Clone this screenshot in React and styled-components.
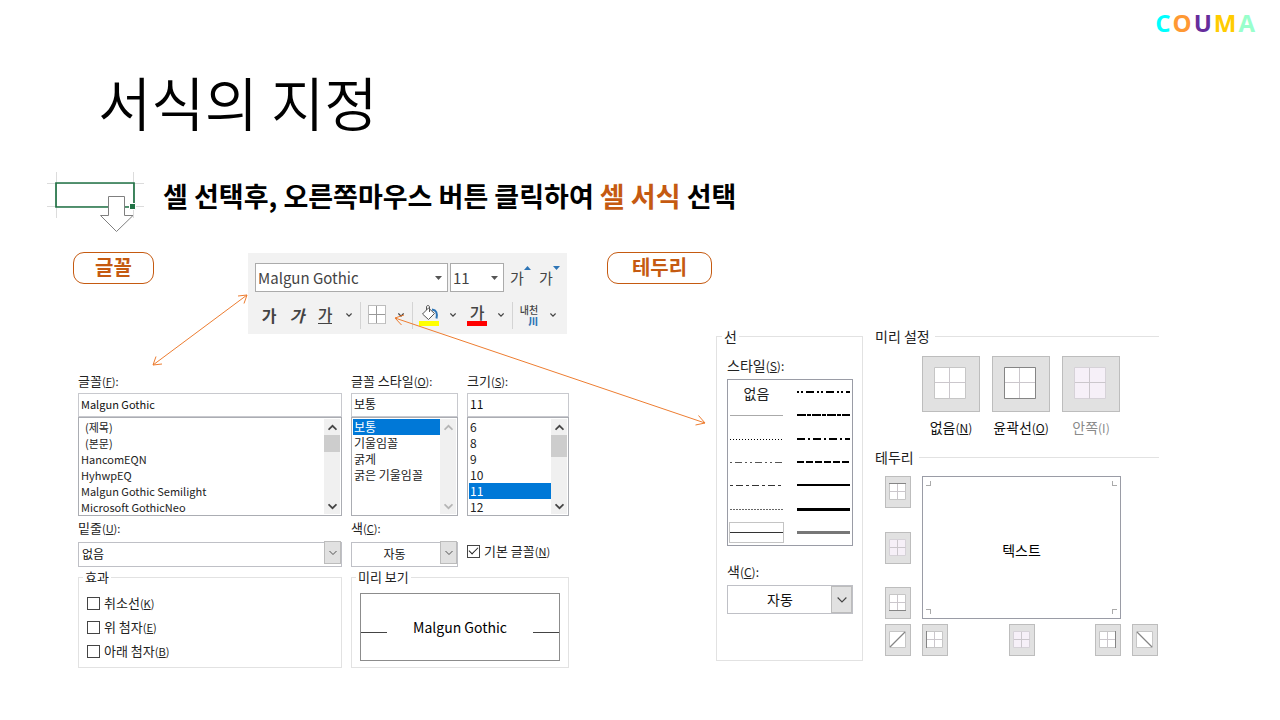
import React from "react";
import styled, { createGlobalStyle, css } from "styled-components";

const GlobalStyle = createGlobalStyle`
  *, *::before, *::after { box-sizing: border-box; }
  body { margin: 0; background: #fff; color: #000; }
  body, button, input, select {
    font-family: "Noto Sans CJK KR", "Noto Sans", sans-serif;
  }
`;

/* ---------- Slide ---------- */
const Slide = styled.div`
  padding-bottom: 28px;
`;
const Brand = styled.header`
  display: flex;
  justify-content: flex-end;
  gap: 2px;
  padding: 0 25px 2px;
  font: 700 24px/46px "Open Sans", sans-serif;
`;
const BrandLetter = styled.span`
  color: ${(p) => p.$color};
`;
const Title = styled.h1`
  margin: 21px 0 39px 98px;
  font-size: 58px;
  font-weight: 350;
  line-height: 64px;
`;
const Cue = styled.section`
  display: flex;
  gap: 19px;
  margin: 0 47px 20px;
`;
const CueText = styled.h2`
  margin: 0;
  font-size: 27px;
  font-weight: 700;
  line-height: 48px;
`;
const Accent = styled.em`
  font-style: normal;
  color: #c55a11;
`;
const Body = styled.main`
  position: relative;
  display: grid;
  grid-template-columns: 496fr 553fr;
  gap: 38px;
  margin: 0 120px 0 73px;
`;
const Connectors = styled.svg`
  position: absolute;
  inset: 0;
  width: 100%;
  height: 100%;
  pointer-events: none;
  fill: none;
  stroke: #ed7d31;
`;
const Tag = styled.h3`
  width: ${(p) => p.$width}px;
  height: 32px;
  margin: 0;
  border: 1px solid #c55a11;
  border-radius: 11px;
  color: #c55a11;
  font-size: 20px;
  font-weight: 700;
  line-height: 27px;
  text-align: center;
`;

/* ---------- Ribbon ---------- */
const TopRow = styled.div`
  display: flex;
  justify-content: space-between;
  align-items: flex-start;
  margin-bottom: 38px;
  padding-right: 2px;
`;
const Ribbon = styled.div`
  width: 319px;
  height: 81px;
  margin-top: 1px;
  padding: 10px 0 0 7px;
  background: #f2f2f2;
  color: #444;
`;
const RibbonRow = styled.div`
  display: flex;
  align-items: center;
  height: ${(p) => p.$height}px;
  margin-bottom: 9px;
`;
const Combo = styled.div`
  display: flex;
  align-items: center;
  width: ${(p) => p.$width}px;
  height: 29px;
  margin-right: 2px;
  padding: 0 5px 0 2px;
  border: 1px solid #ababab;
  background: #fff;
`;
const ComboInput = styled.input`
  flex: 1;
  min-width: 0;
  padding: 0;
  border: 0;
  background: transparent;
  color: #444;
  font-size: 15px;
  line-height: 24px;
`;
const PlainButton = styled.button`
  display: flex;
  align-items: center;
  justify-content: center;
  padding: 0;
  border: 0;
  background: none;
  color: #444;
`;
const ToolButton = styled(PlainButton)`
  width: 28px;
  height: 28px;
  font-size: 16px;
  font-weight: ${(p) => p.$weight || 400};
  font-style: ${(p) => (p.$italic ? "italic" : "normal")};
  line-height: 20px;
`;
const StepButton = styled(PlainButton)`
  align-items: flex-start;
  width: 29px;
  font-size: 15px;
  line-height: 24px;
`;
const MenuButton = styled(PlainButton)`
  width: 20px;
  height: 28px;
`;
const Underlined = styled.span`
  border-bottom: 1px solid #444;
  line-height: 17px;
`;
const ColorLetter = styled.span`
  width: 20px;
  border-bottom: 5px solid #f00;
  line-height: 17px;
  text-align: center;
`;
const Divider = styled.span`
  width: 1px;
  height: 27px;
  margin: 0 2px 0 1px;
  background: #d4d4d4;
`;
const Phonetic = styled.span`
  display: grid;
  justify-items: end;
  font-size: 10px;
  font-weight: 500;
  line-height: 11px;
`;
const PhoneticMark = styled.span`
  color: #2e75b6;
  font-weight: 900;
`;

/* ---------- Shared form parts ---------- */
const Label = styled.label`
  display: block;
  font-size: ${(p) => (p.$large ? 14 : 13)}px;
  line-height: 18px;
  color: #222;
`;
const KeyHint = styled.span`
  font-size: ${(p) => (p.$large ? 12 : 11)}px;
`;
const SelectWrap = styled.div`
  position: relative;
  height: ${(p) => p.$height}px;
`;
const SelectBox = styled.select`
  appearance: none;
  width: 100%;
  height: 100%;
  padding: 0 ${(p) => (p.$center ? 28 : 22)}px 2px ${(p) => (p.$center ? 8 : 3)}px;
  border: 1px solid #bfc0c6;
  border-radius: 0;
  background: #fff;
  color: #111;
  font-size: ${(p) => (p.$large ? 14 : 12)}px;
  text-align: ${(p) => (p.$center ? "center" : "left")};
  text-align-last: ${(p) => (p.$center ? "center" : "left")};
`;
const SelectArrow = styled.span`
  position: absolute;
  inset: 1px 1px 1px auto;
  display: grid;
  place-items: center;
  width: ${(p) => p.$width}px;
  border: 1px solid #bcbcbc;
  background: #e1e1e1;
  pointer-events: none;
`;
const Group = styled.fieldset`
  min-width: 0;
  height: ${(p) => p.$height}px;
  margin: 0;
  padding: 0 8px;
  border: 1px solid #e2e2e2;
`;
const Legend = styled.legend`
  margin-left: ${(p) => p.$indent || 0}px;
  padding: 0 2px;
  font-size: ${(p) => (p.$large ? 14 : 13)}px;
  line-height: 18px;
  color: #222;
`;

/* ---------- Font dialog ---------- */
const FontDialog = styled.form`
  display: grid;
  grid-template-columns: 264fr 107fr 102fr;
  gap: 3px 9px;
  margin-left: 5px;
`;
const TextBox = styled.input`
  display: block;
  width: 100%;
  height: 24px;
  margin-top: 3px;
  padding: 0 2px 3px;
  border: 1px solid #c8c9ce;
  background: #fff;
  color: #111;
  font-size: ${(p) => p.$size}px;
`;
const ListFrame = styled.div`
  display: flex;
  height: 99px;
  padding: 1px;
  border: 1px solid #abadb3;
  background: #fff;
`;
const Options = styled.ul`
  flex: 1;
  min-width: 0;
  margin: 0;
  padding: 0;
  list-style: none;
`;
const Option = styled.li`
  height: 16px;
  padding-left: ${(p) => (p.$indent ? 5 : 1)}px;
  font-size: ${(p) => p.$size}px;
  line-height: 16px;
  color: #222;
  white-space: nowrap;
  ${(p) => p.$selected && css`
    background: #0078d7;
    color: #fff;
  `}
`;
const Track = styled.div`
  display: flex;
  flex-direction: column;
  align-items: center;
  width: 16px;
  padding: 4px 0 3px;
  background: #f0f0f0;
`;
const Thumb = styled.span`
  width: 16px;
  height: ${(p) => p.$height}px;
  margin: 3px 0 auto;
  background: ${(p) => (p.$height ? "#cdcdcd" : "transparent")};
`;
const SelectField = styled.div`
  display: flex;
  flex-direction: column;
  gap: 3px;
`;
const CheckRow = styled.label`
  display: flex;
  align-items: center;
  gap: 4px;
  height: 24px;
  font-size: 13px;
  line-height: 24px;
  color: #222;
  white-space: nowrap;
`;
const DefaultFont = styled.div`
  align-self: end;
  padding-bottom: 2px;
`;
const Checks = styled.div`
  padding-top: 5px;
`;
const Check = styled.input`
  appearance: none;
  flex: none;
  display: grid;
  place-items: center;
  width: 13px;
  height: 13px;
  margin: 0;
  border: 1px solid #444;
  background: #fff;
  &:checked::after {
    content: "";
    width: 9px;
    height: 5px;
    margin-bottom: 3px;
    border: solid #222;
    border-width: 0 0 1px 1px;
    transform: rotate(-45deg);
  }
`;
const PreviewGroup = styled(Group)`
  grid-column: span 2;
`;
const FontPreview = styled.div`
  display: flex;
  align-items: center;
  justify-content: space-between;
  height: 68px;
  margin-top: 7px;
  border: 1px solid #8c8c8c;
  font-size: 14px;
  &::before, &::after {
    content: "";
    width: 26px;
    height: 1px;
    margin-top: 10px;
    background: #444;
  }
`;

/* ---------- Border dialog ---------- */
const BorderDialog = styled.form`
  display: grid;
  grid-template-columns: 147fr 285fr;
  gap: 12px;
  margin: 43px 0 0 109px;
`;
const LineBody = styled.div`
  display: grid;
  gap: 4px;
  padding: 11px 1px 0 2px;
`;
const StyleGrid = styled.div`
  display: grid;
  grid-template-columns: 1fr 1fr;
  grid-template-rows: repeat(7, 1fr);
  grid-auto-flow: column;
  column-gap: 12px;
  height: 167px;
  margin-bottom: 12px;
  padding: 1px;
  border: 1px solid #9a9ca6;
`;
const StyleButton = styled(PlainButton)`
  height: 21px;
  align-self: center;
  border: 1px solid ${(p) => (p.$selected ? "#c4c4c4" : "transparent")};
  font-size: 14px;
  line-height: 18px;
  color: #222;
`;
const StrokeSample = styled.svg`
  display: block;
  width: 100%;
  height: 5px;
`;
const SectionTitle = styled.h4`
  display: flex;
  align-items: center;
  gap: 5px;
  margin: 0 1px 0 0;
  font-size: 14px;
  font-weight: 400;
  line-height: 18px;
  color: #222;
  &::after {
    content: "";
    flex: 1;
    height: 1px;
    background: #e2e2e2;
  }
`;
const Presets = styled.div`
  display: flex;
  gap: 12px;
  margin: 11px 0 11px;
  padding-left: 47px;
`;
const Preset = styled.div`
  display: flex;
  flex-direction: column;
  align-items: center;
  gap: 6px;
  width: 58px;
`;
const PresetLabel = styled.label`
  font-size: 14px;
  line-height: 18px;
  white-space: nowrap;
  color: ${(p) => (p.$muted ? "#8a8a8a" : "#111")};
`;
const TileButton = styled(PlainButton)`
  width: ${(p) => (p.$large ? 58 : 26)}px;
  height: ${(p) => (p.$large ? 56 : 32)}px;
  border: 1px solid #bdbdbd;
  background: #e1e1e1;
`;
const BorderArea = styled.div`
  display: grid;
  grid-template-columns: 26px 1fr 26px;
  gap: 5px 11px;
  margin: 10px 2px 0 10px;
`;
const SideTools = styled.div`
  display: flex;
  flex-direction: column;
  justify-content: space-between;
`;
const BottomTools = styled.div`
  display: flex;
  justify-content: space-between;
`;
const CellPreview = styled.div`
  display: grid;
  grid-template: 1fr auto 1fr / 1fr 1fr;
  grid-column: 2 / 3;
  height: 143px;
  padding: 4px 3px;
  border: 1px solid #9a9ca6;
`;
const CornerMark = styled.span`
  width: 5px;
  height: 5px;
  border: 0 solid #aaa;
  border-width: ${(p) => p.$edges};
  justify-self: ${(p) => p.$x};
  align-self: ${(p) => p.$y};
`;
const PreviewText = styled.span`
  grid-column: 1 / -1;
  padding-top: 4px;
  text-align: center;
  font-size: 14px;
  line-height: 20px;
`;

/* ---------- Drawings ---------- */
const Chevron = ({ size = 8, up, color = "#444", weight = 1 }) => (
  <svg width={size} height={size} viewBox="0 0 8 8" aria-hidden="true">
    <path d={up ? "M0.5 6 4 2.5 7.5 6" : "M0.5 2 4 5.5 7.5 2"} fill="none" stroke={color} strokeWidth={weight} />
  </svg>
);
const Triangle = ({ up, color = "#555" }) => (
  <svg width="7" height="4" viewBox="0 0 7 4" aria-hidden="true">
    <path d={up ? "M0 4h7L3.5 0z" : "M0 0h7L3.5 4z"} fill={color} />
  </svg>
);
const SelectedCell = () => (
  <svg width="97" height="60" viewBox="0 0 97 60" fill="none" aria-hidden="true">
    <path d="M9.5 0v46M86.5 0v46M0 11.5h97M0 34.5h97" stroke="#dcdcdc" />
    <path d="M9 11h78v24H9z" stroke="#217346" strokeWidth="1.7" />
    <path d="M82.5 31.5h6v6h-6z" fill="#217346" stroke="#fff" />
    <path d="M61.5 24.5h16v19h8.5L69.5 59.5 53.5 43.5h8z" fill="#fff" stroke="#7f7f7f" />
  </svg>
);
const DottedGrid = () => (
  <svg width="18" height="20" viewBox="0 0 18 20" fill="none" aria-hidden="true">
    <path d="M1 1h16v18H1z" fill="#fff" />
    <path d="M.5.5h17v18H.5z" stroke="#888" strokeDasharray="1 1" />
    <path d="M8.5 1v17M1 9.5h16" stroke="#999" />
  </svg>
);
const Bucket = () => (
  <svg width="20" height="21" viewBox="0 0 20 21" fill="none" aria-hidden="true">
    <path d="M0 16h20v5H0z" fill="#ff0" />
    <path d="M13 4.5c4.500 .5 5.500 3.500 4.500 9" stroke="#2e75b6" strokeWidth="2" />
    <path d="M9.500 3 15.500 8.500 9.500 14.500 3.500 9z" fill="#fff" stroke="#555" />
    <path d="M7.500 5V2c0-2 3-2 3 0v5" stroke="#555" />
  </svg>
);

/* Four-cell table glyph; the first and last strokes sit on half pixels to stay crisp. */
const GridGlyph = ({ large, kind, muted }) => {
  const size = large ? 34 : 18;
  const end = large ? 31.5 : 16.5;
  const mid = large ? 15.5 : 8.5;
  const edges = {
    top: `M0 .5H${end + 0.5}`,
    bottom: `M0 ${end}H${end + 0.5}`,
    left: `M.5 0V${end + 0.5}`,
    right: `M${end} 0V${end + 0.5}`,
    outline: `M.5 .5H${end}V${end}H.5z`,
    rising: `M1 ${end - 0.5} ${end - 0.5} 1`,
    falling: `M1 1 ${end - 0.5} ${end - 0.5}`,
  };
  const diagonal = kind === "rising" || kind === "falling";
  return (
    <svg width={size} height={size} viewBox={`0 0 ${size} ${size}`} fill="none" aria-hidden="true">
      <path d={`M.5 .5H${end}V${end}H.5z`} fill={muted ? "#f6f0f8" : "#fff"} stroke={muted ? "#d6d2d8" : "#c6c6c6"} />
      {!diagonal && <path d={`M1 ${mid}H${end}`} stroke="#cbc7cc" />}
      {!diagonal && <path d={`M${mid} 1V${end}`} stroke="#cbc7cc" />}
      {edges[kind] && <path d={edges[kind]} stroke="#858585" strokeWidth={diagonal ? 1.3 : 1} />}
    </svg>
  );
};

/* ---------- Composed parts ---------- */
const Key = ({ k, plain, colon, large }) => (
  <KeyHint $large={large}>({plain ? k : <u>{k}</u>}){colon && ":"}</KeyHint>
);

const DropDown = ({ id, value, height, center, large }) => (
  <SelectWrap $height={height}>
    <SelectBox id={id} $center={center} $large={large} defaultValue={value}>
      <option>{value}</option>
    </SelectBox>
    <SelectArrow $width={large ? 21 : 17}><Chevron size={large ? 10 : 8} weight={0.9} /></SelectArrow>
  </SelectWrap>
);

const ListField = ({ id, label, hint, value, items, selected, thumb, size = 12 }) => (
  <div>
    <Label htmlFor={id}>{label}<Key k={hint} colon /></Label>
    <TextBox id={id} defaultValue={value} $size={size} />
    <ListFrame>
      <Options role="listbox" aria-label={label}>
        {items.map((item) => (
          <Option key={item} role="option" aria-selected={item === selected} $size={size}
            $selected={item === selected} $indent={item.startsWith("(")}>{item}</Option>
        ))}
      </Options>
      <Track>
        <Chevron up size={9} weight={1.5} color={thumb ? "#444" : "#b5b5b5"} />
        <Thumb $height={thumb} />
        <Chevron size={9} weight={1.5} color={thumb ? "#444" : "#b5b5b5"} />
      </Track>
    </ListFrame>
  </div>
);

const CheckField = ({ label, hint, checked }) => (
  <CheckRow>
    <Check type="checkbox" defaultChecked={checked} />
    <span>{label}<Key k={hint} /></span>
  </CheckRow>
);

const strokes = [
  { name: "없음" },
  { name: "가는 점선", color: "#aaa", width: 1 },
  { name: "점선", dash: "1 2", width: 1 },
  { name: "이점 쇄선", dash: "2 3 7 3 2 3", color: "#555", width: 1 },
  { name: "일점 쇄선", dash: "3 3 7 3", color: "#333", width: 1 },
  { name: "파선", dash: "2 1", color: "#666", width: 1 },
  { name: "실선", width: 1, color: "#333", selected: true },
  { name: "중간 이점 쇄선", dash: "2 2 2 3 8 3", width: 2 },
  { name: "기울어진 쇄선", dash: "9 1 4 1", width: 2 },
  { name: "중간 일점 쇄선", dash: "8 3 2 3", width: 2 },
  { name: "중간 파선", dash: "7 2", width: 2 },
  { name: "중간 실선", width: 2 },
  { name: "굵은 실선", width: 3 },
  { name: "이중선", width: 3, color: "#777" },
];

const fonts = ["(제목)", "(본문)", "HancomEQN", "HyhwpEQ", "Malgun Gothic Semilight", "Microsoft GothicNeo"];
const styles = ["보통", "기울임꼴", "굵게", "굵은 기울임꼴"];
const sizes = ["6", "8", "9", "10", "11", "12"];
const brand = [["C", "#00ffff"], ["O", "#ff9933"], ["U", "#662d9c"], ["M", "#ffcc00"], ["A", "#99ffcc"]];

const OptionsMenu = ({ name }) => (
  <MenuButton type="button" aria-label={name}><Chevron size={6} weight={1.6} /></MenuButton>
);

const FormatRibbon = () => (
  <Ribbon>
    <RibbonRow $height={29}>
      <Combo $width={193}><ComboInput aria-label="글꼴" defaultValue="Malgun Gothic" /><Triangle /></Combo>
      <Combo $width={54}><ComboInput aria-label="크기" defaultValue="11" /><Triangle /></Combo>
      <StepButton type="button" aria-label="글꼴 크기 크게">가<Triangle up color="#2e75b6" /></StepButton>
      <StepButton type="button" aria-label="글꼴 크기 작게">가<Triangle color="#2e75b6" /></StepButton>
    </RibbonRow>
    <RibbonRow $height={28}>
      <ToolButton type="button" $weight={700}>가</ToolButton>
      <ToolButton type="button" $weight={700} $italic>가</ToolButton>
      <ToolButton type="button" $weight={500}><Underlined>가</Underlined></ToolButton>
      <OptionsMenu name="밑줄 옵션" />
      <Divider />
      <ToolButton type="button" aria-label="테두리"><DottedGrid /></ToolButton>
      <OptionsMenu name="테두리 옵션" />
      <Divider />
      <ToolButton type="button" aria-label="채우기 색"><Bucket /></ToolButton>
      <OptionsMenu name="채우기 옵션" />
      <ToolButton type="button" $weight={500}><ColorLetter>가</ColorLetter></ToolButton>
      <OptionsMenu name="글꼴 색 옵션" />
      <Divider />
      <ToolButton type="button"><Phonetic>내천<PhoneticMark>川</PhoneticMark></Phonetic></ToolButton>
      <OptionsMenu name="윗주 옵션" />
    </RibbonRow>
  </Ribbon>
);

const FontSettings = () => (
  <FontDialog>
    <ListField id="font" label="글꼴" hint="F" value="Malgun Gothic" items={fonts} thumb={17} size={11} />
    <ListField id="style" label="글꼴 스타일" hint="O" value="보통" items={styles} selected="보통" thumb={0} />
    <ListField id="size" label="크기" hint="S" value="11" items={sizes} selected="11" thumb={22} />
    <SelectField>
      <Label htmlFor="underline">밑줄<Key k="U" colon /></Label>
      <DropDown id="underline" value="없음" height={25} />
    </SelectField>
    <SelectField>
      <Label htmlFor="color">색<Key k="C" colon /></Label>
      <DropDown id="color" value="자동" height={25} center />
    </SelectField>
    <DefaultFont><CheckField label="기본 글꼴" hint="N" checked /></DefaultFont>
    <Group $height={100}>
      <Legend $indent={-4}>효과</Legend>
      <Checks>
        <CheckField label="취소선" hint="K" />
        <CheckField label="위 첨자" hint="E" />
        <CheckField label="아래 첨자" hint="B" />
      </Checks>
    </Group>
    <PreviewGroup $height={100}>
      <Legend $indent={-4}>미리 보기</Legend>
      <FontPreview>Malgun Gothic</FontPreview>
    </PreviewGroup>
  </FontDialog>
);

const PresetOption = ({ id, label, hint, plain, kind, muted }) => (
  <Preset>
    <TileButton id={id} type="button" $large><GridGlyph large kind={kind} muted={muted} /></TileButton>
    <PresetLabel htmlFor={id} $muted={muted}>{label}<Key k={hint} plain={plain} large /></PresetLabel>
  </Preset>
);

const EdgeTool = ({ kind, name, muted }) => (
  <TileButton type="button" aria-label={name}><GridGlyph kind={kind} muted={muted} /></TileButton>
);

const BorderSettings = () => (
  <BorderDialog>
    <Group $height={334}>
      <Legend $indent={-3} $large>선</Legend>
      <LineBody>
        <Label as="span" $large>스타일<Key k="S" colon large /></Label>
        <StyleGrid>
          {strokes.map((s) => (
            <StyleButton key={s.name} type="button" aria-label={s.name} $selected={s.selected}>
              {s.width ? (
                <StrokeSample>
                  <line x1="0" x2="100%" y1={s.width % 2 ? 2.5 : 2} y2={s.width % 2 ? 2.5 : 2}
                    stroke={s.color || "#000"} strokeWidth={s.width} strokeDasharray={s.dash} />
                </StrokeSample>
              ) : s.name}
            </StyleButton>
          ))}
        </StyleGrid>
        <Label htmlFor="lineColor" $large>색<Key k="C" colon large /></Label>
        <DropDown id="lineColor" value="자동" height={29} center large />
      </LineBody>
    </Group>
    <div>
      <SectionTitle>미리 설정</SectionTitle>
      <Presets>
        <PresetOption id="presetNone" label="없음" hint="N" />
        <PresetOption id="presetOutline" label="윤곽선" hint="O" kind="outline" />
        <PresetOption id="presetInside" label="안쪽" hint="I" plain muted />
      </Presets>
      <SectionTitle>테두리</SectionTitle>
      <BorderArea>
        <SideTools>
          <EdgeTool kind="top" name="위쪽" />
          <EdgeTool kind="middle" name="가로 안쪽" muted />
          <EdgeTool kind="bottom" name="아래쪽" />
        </SideTools>
        <CellPreview>
          <CornerMark $edges="0 1px 1px 0" $x="start" $y="start" />
          <CornerMark $edges="0 0 1px 1px" $x="end" $y="start" />
          <PreviewText>텍스트</PreviewText>
          <CornerMark $edges="1px 1px 0 0" $x="start" $y="end" />
          <CornerMark $edges="1px 0 0 1px" $x="end" $y="end" />
        </CellPreview>
        <span />
        <EdgeTool kind="rising" name="상향 대각선" />
        <BottomTools>
          <EdgeTool kind="left" name="왼쪽" />
          <EdgeTool kind="middle" name="세로 안쪽" muted />
          <EdgeTool kind="right" name="오른쪽" />
        </BottomTools>
        <EdgeTool kind="falling" name="하향 대각선" />
      </BorderArea>
    </div>
  </BorderDialog>
);

export default function App() {
  return (
    <Slide>
      <GlobalStyle />
      <Brand>
        {brand.map(([letter, color]) => <BrandLetter key={letter} $color={color}>{letter}</BrandLetter>)}
      </Brand>
      <Title>서식의 지정</Title>
      <Cue>
        <SelectedCell />
        <CueText>셀 선택후, 오른쪽마우스 버튼 클릭하여 <Accent>셀 서식</Accent> 선택</CueText>
      </Cue>
      <Body>
        <section>
          <TopRow>
            <Tag $width={81}>글꼴</Tag>
            <FormatRibbon />
          </TopRow>
          <FontSettings />
        </section>
        <section>
          <Tag $width={105}>테두리</Tag>
          <BorderSettings />
        </section>
        <Connectors viewBox="0 0 1087 416" preserveAspectRatio="none" aria-hidden="true">
          <path d="M80 113 174 43M83 104.5 80 113 89 112M165 44 174 43 171 51.5" />
          <path d="M322 66 632 171M331 63 322 66 328.5 73M625.5 163.5 632 171 622.5 173" />
        </Connectors>
      </Body>
    </Slide>
  );
}
